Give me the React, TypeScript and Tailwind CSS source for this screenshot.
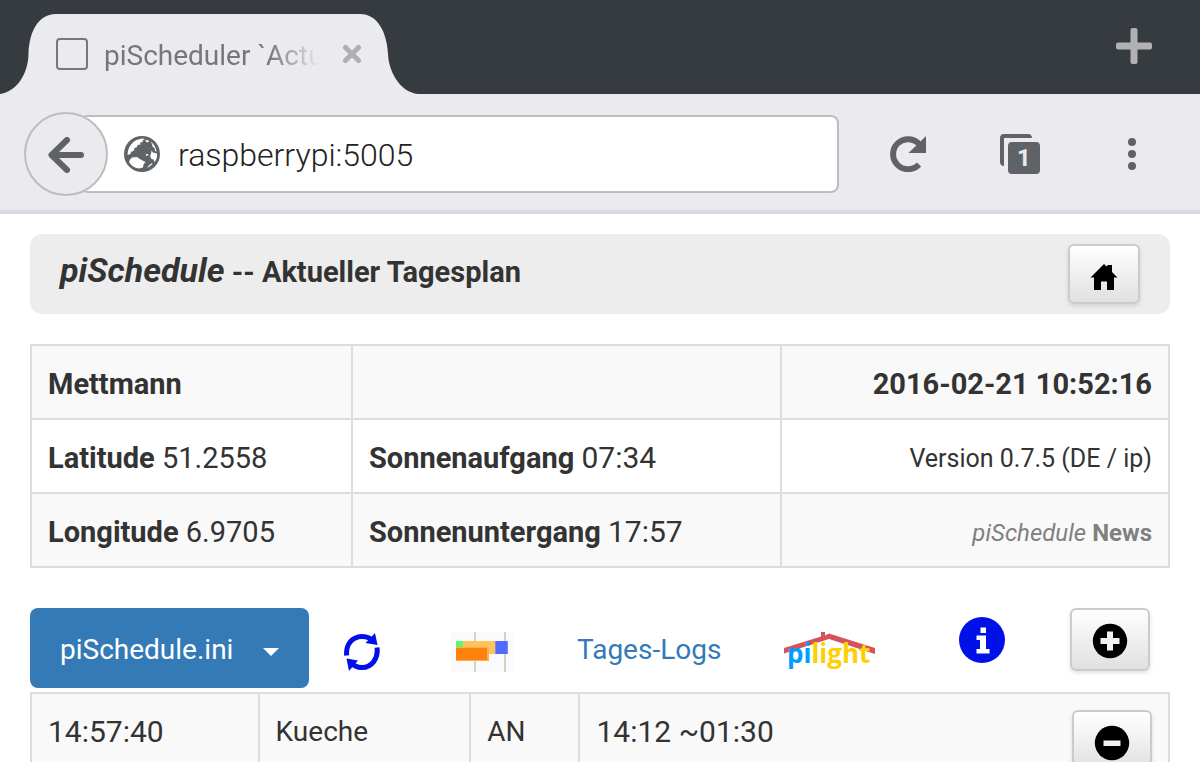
import type { ReactNode } from "react";

function TabShape() {
  return (
    <svg className="absolute inset-0" width="420" height="94" viewBox="0 0 420 94" aria-hidden="true">
      <path
        d="M0 94C16 92 28 75 28.500 54C29 34 37 14 56 14H360C378 14 387 33 388 54C388.500 70 399 92 418 94Z"
        fill="#ebeaef"
      />
    </svg>
  );
}

function GlobeIcon() {
  return (
    <svg width="36" height="36" viewBox="0 0 36 36" className="shrink-0" aria-hidden="true">
      <circle cx="18" cy="18" r="18" fill="#5f6368" />
      <g fill="#fff">
        <path d="M4 14.500C5.500 9.500 8.500 6 12.500 4L18 2.500L21 3L18.500 4.500L19 6L16 6.500L16.500 8.500L13.500 9L13 11L10.500 12L10 14.500L7 16L6.500 18L3.500 19Z" />
        <path d="M21 4.500L24 4L25 5.500L23 6.500Z" />
        <path d="M26.500 5.500C30 8 32 11.500 32.500 15.500L31 15L30.500 12L28.500 10.500L28 8Z" />
        <path d="M27.500 14.500L29 16.500L33 17.500C33.500 21.500 32 24.500 30.500 26L29.500 23.500L27.500 23L26 20L27 18Z" />
        <path d="M6 23.500L8 21.500L13 21L15 22.500L18.500 24.500L21.500 26L19.500 28.500L19 31.500L15 32.500C10.500 32 7 29.500 5 26Z" />
        <path d="M21.500 18.500L24 18L24.500 19L22.500 20Z" />
        <path d="M28 27L28.500 28L25 31L23 31.500L25.500 29Z" />
      </g>
    </svg>
  );
}

function RefreshIcon() {
  return (
    <svg width="36" height="38" viewBox="0 0 36 38" aria-hidden="true">
      <g fill="none" stroke="#0010e8" strokeWidth="5">
        <path d="M2.700 22.500C1.500 12 8 3.500 18 3.500C23 3.500 27 5 29.500 9" />
        <path d="M33 14.500C34.500 25 28 34.500 18 34.500C13 34.500 9 32.500 6.500 29" />
      </g>
      <path d="M31 0L33.500 12L21.500 10Z" fill="#0010e8" />
      <path d="M5 38L2.500 25.500L14 27.500Z" fill="#0010e8" />
    </svg>
  );
}

function ChartIcon() {
  return (
    <svg width="62" height="40" viewBox="0 0 62 40" aria-hidden="true">
      <rect width="62" height="40" fill="#fafafd" />
      <rect x="23" width="2" height="40" fill="#d3d3c2" />
      <rect x="53" width="2" height="40" fill="#d3d3c2" />
      <rect x="5" y="9" width="8" height="7" fill="#58fa70" />
      <rect x="12" y="9" width="33" height="13" fill="#fec35a" />
      <rect x="5" y="15" width="33" height="14" fill="#ffae4c" />
      <rect x="5" y="16" width="31" height="12" fill="#ff820e" />
      <rect x="44" y="9" width="13" height="13" fill="#7588ff" />
      <rect x="45" y="9" width="11" height="13" fill="#526bff" />
    </svg>
  );
}

function PilightLogo() {
  return (
    <svg width="92" height="40" viewBox="0 0 92 40" role="img" aria-label="pilight">
      <path d="M0 16L37 4.500V0H41V3.500L45 1.500L91 16V22L45 7L0 21.500Z" fill="#d55458" />
      <text x="3" y="31" fontFamily="'Open Sans', sans-serif" fontSize="26" fontWeight="700">
        <tspan fill="#009dff">pi</tspan>
        <tspan fill="#ffd000">light</tspan>
      </text>
    </svg>
  );
}

function InfoIcon() {
  return (
    <svg width="46" height="46" viewBox="0 0 46 46" aria-hidden="true">
      <circle cx="23" cy="23" r="23" fill="#0010e8" />
      <path d="M21.500 10.500H27V16H21.500ZM17.500 18.500H27V32H30.500V36.500H17.500V32H21V23H17.500Z" fill="#fff" />
    </svg>
  );
}

function HomeIcon() {
  return (
    <svg width="28" height="28" viewBox="0 0 28 28" aria-hidden="true">
      <path d="M14 1L16.500 3.500L18 2H22V9L27.500 14.500H24V27H17V18.500H11V27H4V14.500H.5Z" fill="#000" />
    </svg>
  );
}

function CircleSign({ plus = false }: { plus?: boolean }) {
  return (
    <svg width="36" height="36" viewBox="0 0 36 36" aria-hidden="true">
      <circle cx="18" cy="18" r="17.200" fill="#000" />
      {plus ? (
        <path d="M15 8.500H21V15H27.500V21H21V27.500H15V21H8.500V15H15Z" fill="#f2f2f2" />
      ) : (
        <rect x="9.500" y="15.500" width="17" height="5.500" fill="#f2f2f2" />
      )}
    </svg>
  );
}

function GlossButton({ label, size, children }: { label: string; size: string; children: ReactNode }) {
  return (
    <button
      type="button"
      aria-label={label}
      className={`flex shrink-0 items-center justify-center rounded-md border-2 border-[#cbcbcb] bg-linear-to-b from-white to-[#e0e0e0] shadow-[0_2px_4px_rgba(0,0,0,0.12)] ${size}`}
    >
      {children}
    </button>
  );
}

const cell = "border-2 border-[#dddddd] px-4";
const infoCell = `${cell} pt-1`;
const planCell = `${cell} py-[18px]`;

function BrowserBar() {
  return (
    <header className="shrink-0 font-[Roboto,sans-serif]">
      <div className="flex h-[94px] items-center justify-between bg-[#363b3f] pr-12">
        <div className="relative flex h-[94px] w-[420px] items-center pt-[18px] pl-14">
          <TabShape />
          <span className="relative -mt-1 size-8 shrink-0 rounded-[4px] border-2 border-[#777777]" />
          <span className="relative ml-4 w-[216px] overflow-hidden text-[28px] leading-9 whitespace-nowrap text-[#777777] [mask-image:linear-gradient(to_right,black_76%,transparent)]">
            piScheduler `Actu
          </span>
          <button type="button" aria-label="Close tab" className="relative -mt-1 ml-[22px]">
            <svg width="20" height="20" viewBox="0 0 20 20" aria-hidden="true">
              <path d="M3.500 3.500L16.500 16.500M16.500 3.500L3.500 16.500" stroke="#afafb0" strokeWidth="5" strokeLinecap="round" />
            </svg>
          </button>
        </div>
        <button type="button" aria-label="New tab" className="pb-0.5">
          <svg width="36" height="36" viewBox="0 0 36 36" fill="#b1b1b3" aria-hidden="true">
            <rect x="14.500" width="7" height="36" rx="2" />
            <rect y="14.500" width="36" height="7" rx="2" />
          </svg>
        </button>
      </div>
      <div className="flex h-[120px] items-center border-b-4 border-[#dad9df] bg-[#ebeaef] pt-1 pr-16 pl-6">
        <button
          type="button"
          aria-label="Back"
          className="relative z-10 flex size-[84px] shrink-0 items-center justify-center rounded-full border-2 border-[#bdbdbd] bg-[#ebeaef] pt-0.5"
        >
          <svg width="36" height="36" viewBox="0 0 36 36" fill="none" stroke="#5f6368" strokeWidth="6" strokeLinecap="round" strokeLinejoin="round" aria-hidden="true">
            <path d="M19 3L3.500 18L19 33M4 18H33" />
          </svg>
        </button>
        <div className="-ml-7 flex h-[78px] min-w-0 flex-1 items-center gap-[18px] rounded-lg border-2 border-[#bdbdbd] bg-white pl-[42px]">
          <GlobeIcon />
          <input
            aria-label="Address"
            defaultValue="raspberrypi:5005"
            className="min-w-0 flex-1 bg-transparent pt-0.5 text-[32px] leading-10 font-light text-[#222222] outline-none"
          />
        </div>
        <button type="button" aria-label="Reload" className="ml-[51px]">
          <svg width="36" height="36" viewBox="0 0 36 36" aria-hidden="true">
            <path d="M29 28.500A15 15 0 1 1 29.500 8.500" fill="none" stroke="#5f6368" strokeWidth="6" />
            <path d="M36 0V17H18.500Z" fill="#5f6368" />
          </svg>
        </button>
        <button type="button" aria-label="Tabs" className="relative ml-[74px]">
          <svg width="40" height="40" viewBox="0 0 40 40" aria-hidden="true">
            <path d="M4 32C1.500 32 0 30.500 0 28V4C0 1.500 1.500 0 4 0H28C30.500 0 32 1.500 32 4H4Z" fill="#5f6368" />
            <rect x="8" y="8" width="32" height="32" rx="4" fill="#5f6368" />
          </svg>
          <span className="absolute top-2 left-2 w-8 text-center text-2xl leading-8 font-bold text-[#ebeaef]">1</span>
        </button>
        <button type="button" aria-label="Menu" className="ml-[88px]">
          <svg width="8" height="32" viewBox="0 0 8 32" fill="#5f6368" aria-hidden="true">
            <circle cx="4" cy="4" r="4" />
            <circle cx="4" cy="16" r="4" />
            <circle cx="4" cy="28" r="4" />
          </svg>
        </button>
      </div>
    </header>
  );
}

export default function App() {
  return (
    <div className="flex h-screen flex-col overflow-hidden bg-white">
      <BrowserBar />
      <main className="min-h-0 flex-1 overflow-hidden px-[30px] pt-5 font-[Roboto,sans-serif] text-[28px] leading-10 text-[#333333]">
        <div className="flex h-20 items-center justify-between rounded-xl bg-[#ededed] px-[30px]">
          <h1 className="pb-1.5 text-[29px] font-bold">
            <em className="text-[34px]">piSchedule</em> -- Aktueller Tagesplan
          </h1>
          <GlossButton label="Home" size="h-[60px] w-[72px] pt-1.5">
            <HomeIcon />
          </GlossButton>
        </div>

        <table className="mt-[30px] w-full table-fixed border-collapse">
          <colgroup>
            <col className="w-[28.2%]" />
            <col className="w-[37.7%]" />
            <col />
          </colgroup>
          <tbody>
            <tr className="h-[74px] bg-[#f9f9f9] text-[29px] font-bold">
              <td className={infoCell}>Mettmann</td>
              <td className={infoCell} />
              <td className={`${infoCell} text-right`}>2016-02-21 10:52:16</td>
            </tr>
            <tr className="h-[74px] text-[29px]">
              <td className={infoCell}>
                <b>Latitude</b> 51.2558
              </td>
              <td className={infoCell}>
                <b>Sonnenaufgang</b> <span className="text-[30px]">07:34</span>
              </td>
              <td className={`${cell} pt-1.5 text-right text-[25px]`}>Version 0.7.5 (DE / ip)</td>
            </tr>
            <tr className="h-[74px] bg-[#f9f9f9] text-[29px]">
              <td className={infoCell}>
                <b>Longitude</b> 6.9705
              </td>
              <td className={infoCell}>
                <b>Sonnenuntergang</b> <span className="text-[30px]">17:57</span>
              </td>
              <td className={`${cell} pt-1.5 text-right text-2xl`}>
                <a href="#news" className="text-[#808080]">
                  <em>piSchedule</em> <b>News</b>
                </a>
              </td>
            </tr>
          </tbody>
        </table>

        <div className="mt-10 flex h-[84px] items-start pr-5">
          <div className="relative shrink-0">
            <select
              aria-label="Schedule file"
              className="h-20 w-[279px] appearance-none rounded-lg bg-[#337ab7] pt-1 pr-16 pl-[30px] text-[28px] text-white"
            >
              <option>piSchedule.ini</option>
            </select>
            <svg className="pointer-events-none absolute top-10 right-[30px]" width="16" height="8" viewBox="0 0 16 8" aria-hidden="true">
              <path d="M0 0H16L8 8Z" fill="#fff" />
            </svg>
          </div>
          <a href="#refresh" aria-label="Refresh" className="mt-[25px] ml-[35px] shrink-0">
            <RefreshIcon />
          </a>
          <a href="#chart" aria-label="Day chart" className="mt-6 ml-[71px] shrink-0">
            <ChartIcon />
          </a>
          <a href="#logs" className="mt-[22px] ml-16 text-[#337ab7]">
            Tages-Logs
          </a>
          <a href="#pilight" className="mt-6 ml-auto shrink-0">
            <PilightLogo />
          </a>
          <a href="#info" aria-label="Info" className="mt-[9px] mr-[65px] ml-[83px] shrink-0">
            <InfoIcon />
          </a>
          <GlossButton label="Add" size="h-[63px] w-20 pt-0.5">
            <CircleSign plus />
          </GlossButton>
        </div>

        <table className="w-full table-fixed border-collapse">
          <colgroup>
            <col className="w-[20%]" />
            <col className="w-[18.6%]" />
            <col className="w-[9.6%]" />
            <col />
          </colgroup>
          <tbody>
            <tr className="bg-[#f9f9f9] align-top">
              <td className={`${planCell} text-[30px]`}>14:57:40</td>
              <td className={planCell}>Kueche</td>
              <td className={planCell}>AN</td>
              <td className={`${cell} py-4`}>
                <div className="flex items-start justify-between">
                  <span className="pt-0.5 text-[30px]">14:12 ~01:30</span>
                  <GlossButton label="Remove" size="h-[63px] w-20 pt-0.5">
                    <CircleSign />
                  </GlossButton>
                </div>
              </td>
            </tr>
          </tbody>
        </table>
      </main>
    </div>
  );
}
